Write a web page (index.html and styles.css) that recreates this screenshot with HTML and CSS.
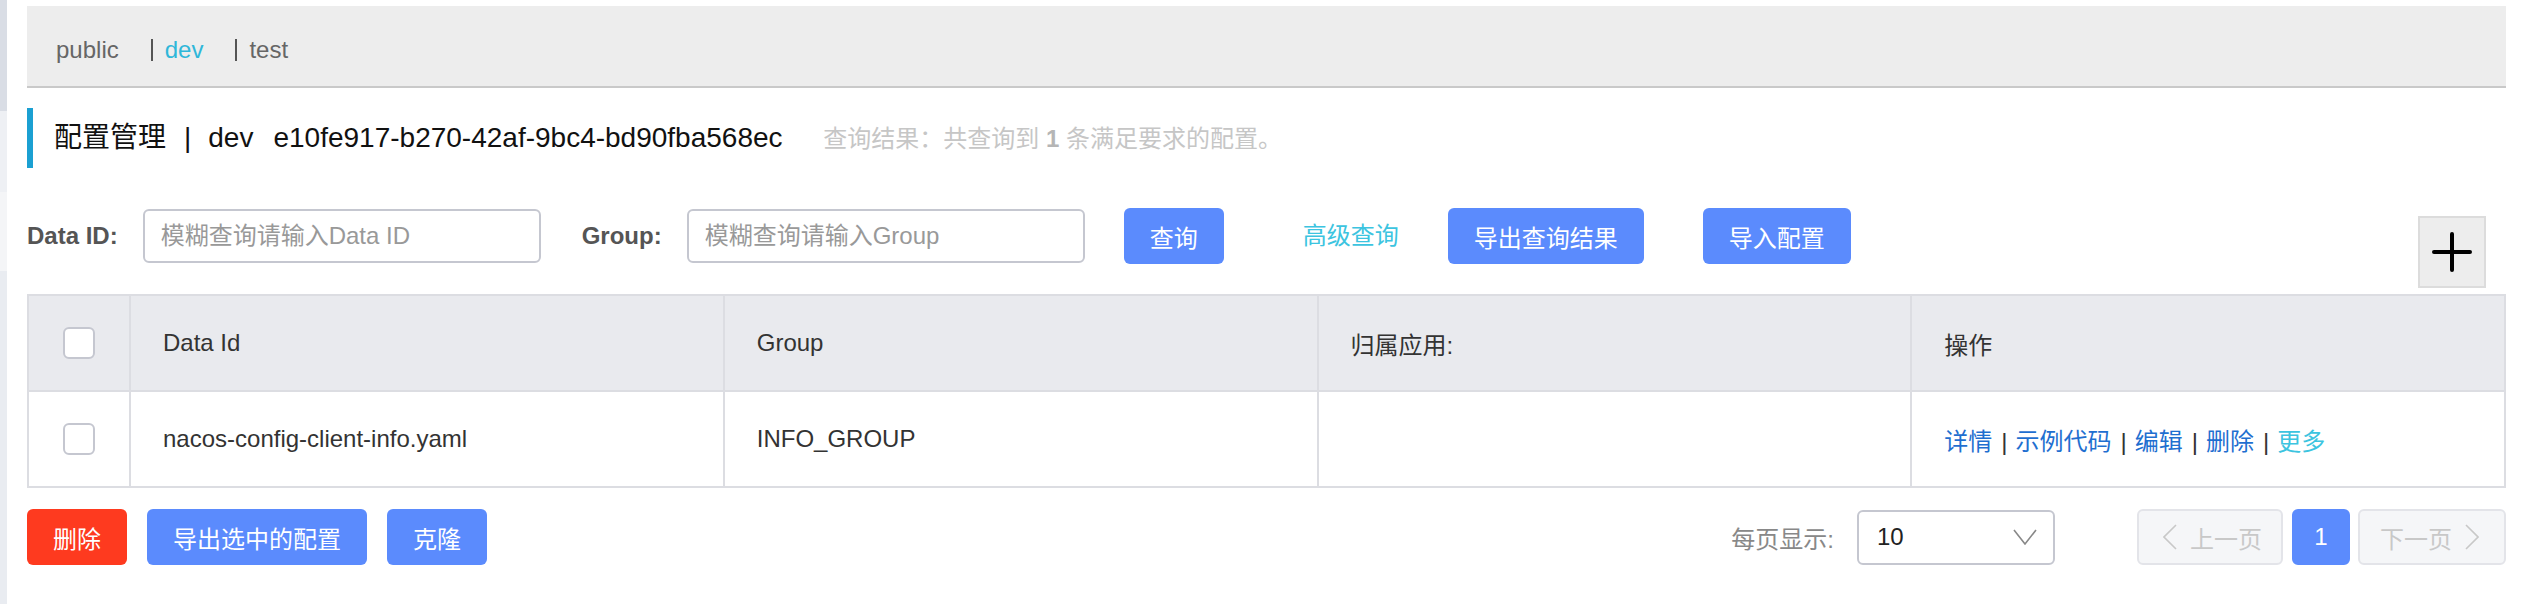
FILE: index.html
```html
<!DOCTYPE html>
<html>
<head>
	<meta charset="utf-8">
	<title>配置管理</title>
	<link rel="stylesheet" href="styles.css">
</head>
<body>
	<div class="page">
	<!-- 左侧菜单露出的一条边 -->
	<aside class="side-strip"></aside>

	<main class="main">
		<nav class="ns-bar">
			<span class="ns-item">public</span>
			<span class="ns-sep"></span><span class="ns-item active">dev</span>
			<span class="ns-sep"></span><span class="ns-item">test</span>
		</nav>

		<section class="page-title">
			<div class="title-line">
				<span class="title-text">配置管理</span><span class="title-sep">|</span><span class="title-text">dev</span><span class="title-text ns-id">e10fe917-b270-42af-9bc4-bd90fba568ec</span>
				<span class="query-result">查询结果：共查询到 <strong>1</strong> 条满足要求的配置。</span>
			</div>
		</section>

		<form class="filter-bar" onsubmit="return false">
			<label class="filter-label">Data ID:</label>
			<input class="filter-input" type="text" placeholder="模糊查询请输入Data ID">
			<label class="filter-label group-label">Group:</label>
			<input class="filter-input group-input" type="text" placeholder="模糊查询请输入Group">
			<button class="btn btn-primary btn-query">查询</button>
			<a href="#!" class="adv-link">高级查询</a>
			<button class="btn btn-primary btn-export">导出查询结果</button>
			<button class="btn btn-primary btn-import">导入配置</button>
			<button class="add-btn" type="button">
				<svg width="40" height="40" viewBox="0 0 40 40">
					<path d="M20 2 V38 M2 20 H38" stroke="#000" stroke-width="4" stroke-linecap="round" fill="none"/>
				</svg>
			</button>
		</form>

		<table class="config-table">
			<colgroup>
				<col class="col-check">
				<col class="col-wide">
				<col class="col-wide">
				<col class="col-wide">
				<col class="col-wide">
			</colgroup>
			<thead>
				<tr>
					<th class="cell-check"><span class="checkbox"></span></th>
					<th>Data Id</th>
					<th>Group</th>
					<th>归属应用:</th>
					<th>操作</th>
				</tr>
			</thead>
			<tbody>
				<tr>
					<td class="cell-check"><span class="checkbox"></span></td>
					<td>nacos-config-client-info.yaml</td>
					<td>INFO_GROUP</td>
					<td></td>
					<td class="ops">
						<a href="#!">详情</a><span class="op-sep">|</span><a href="#!">示例代码</a><span class="op-sep">|</span><a href="#!">编辑</a><span class="op-sep">|</span><a href="#!">删除</a><span class="op-sep">|</span><a href="#!" class="more">更多</a>
					</td>
				</tr>
			</tbody>
		</table>

		<div class="table-footer">
			<button class="btn btn-danger">删除</button>
			<button class="btn btn-primary">导出选中的配置</button>
			<button class="btn btn-primary">克隆</button>

			<div class="pager">
				<span class="page-size-label">每页显示:</span>
				<div class="page-size">
					<span>10</span>
					<svg width="24" height="16" viewBox="0 0 24 16">
						<path d="M1 1 L12 15 L23 1" stroke="#888" stroke-width="1.6" fill="none"/>
					</svg>
				</div>
				<button class="page-btn prev" disabled>
					<svg width="14" height="26" viewBox="0 0 14 26">
						<path d="M13 1 L1 13 L13 25" stroke="#c8c8c8" stroke-width="1.6" fill="none"/>
					</svg>
					上一页
				</button>
				<button class="page-btn current">1</button>
				<button class="page-btn next" disabled>
					下一页
					<svg width="14" height="26" viewBox="0 0 14 26">
						<path d="M1 1 L13 13 L1 25" stroke="#c8c8c8" stroke-width="1.6" fill="none"/>
					</svg>
				</button>
			</div>
		</div>
	</main>
	</div>
</body>
</html>
```

FILE: styles.css
```css
	body {
		margin: 0;
		font-family: "Liberation Sans", "Noto Sans CJK SC", sans-serif;
		font-size: 24px;
		color: #333;
		background: #fff;
	}
	.page {
		display: flex;
		min-height: 604px;
	}
	.side-strip {
		width: 7px;
		flex: none;
		background: linear-gradient(#d9dde5 0, #d9dde5 111px, #eef0f4 111px, #eef0f4 192px, #f4f5f7 192px, #f4f5f7 271px, #e9ecf1 271px);
	}
	.main {
		flex: 1;
		padding: 0 18px 0 20px;
	}

	/* 命名空间 */
	.ns-bar {
		margin-top: 6px;
		height: 82px;
		padding: 8px 0 0 29px;
		box-sizing: border-box;
		background: #ededed;
		border-bottom: 2px solid #c9c9c9;
		display: flex;
		align-items: center;
	}
	.ns-item {
		color: #666;
		line-height: 28px;
	}
	.ns-item.active {
		color: #2fb7d9;
	}
	.ns-sep {
		width: 2px;
		height: 22px;
		background: #555;
		margin: 0 12px 0 32px;
	}

	/* 标题 */
	.page-title {
		margin-top: 20px;
		height: 60px;
		border-left: 6px solid #1ba0d2;
		padding-left: 21px;
		display: flex;
		align-items: center;
	}
	.title-line {
		line-height: 40px;
		white-space: nowrap;
	}
	.title-text {
		font-size: 28px;
		color: #111;
	}
	.title-sep {
		font-size: 28px;
		color: #111;
		margin: 0 17px 0 18px;
	}
	.ns-id {
		margin-left: 20px;
	}
	.query-result {
		margin-left: 34px;
		color: #c6c6c6;
	}
	.query-result strong {
		color: #b5b5b5;
	}

	/* 查询条件 */
	.filter-bar {
		margin: 40px 0 0;
		display: flex;
		align-items: flex-start;
	}
	.filter-label {
		line-height: 56px;
		font-weight: bold;
		color: #555;
		margin-right: 25px;
	}
	.group-label {
		margin-left: 41px;
	}
	.filter-input {
		width: 398px;
		height: 54px;
		margin-top: 1px;
		box-sizing: border-box;
		border: 2px solid #c5c7d0;
		border-radius: 6px;
		padding: 0 16px;
		font-family: inherit;
		font-size: 24px;
		color: #333;
		outline: none;
	}
	.filter-input::placeholder {
		color: #999;
	}
	.btn {
		height: 56px;
		padding: 0 26px;
		border: none;
		border-radius: 6px;
		font-family: inherit;
		font-size: 24px;
		color: #fff;
		cursor: pointer;
		white-space: nowrap;
	}
	.btn-primary {
		background: #5b8bfd;
	}
	.btn-danger {
		background: #fe3a1f;
	}
	.btn-query {
		margin-left: 39px;
	}
	.adv-link {
		margin-left: 79px;
		line-height: 56px;
		color: #3cc4e0;
		text-decoration: none;
	}
	.btn-export {
		margin-left: 49px;
	}
	.btn-import {
		margin-left: 59px;
	}
	.add-btn {
		margin: 8px 20px 0 auto;
		width: 68px;
		height: 72px;
		box-sizing: border-box;
		background: #ededed;
		border: 2px solid #dcdcdc;
		padding: 0;
		display: flex;
		align-items: center;
		justify-content: center;
	}

	/* 表格 */
	.config-table {
		margin-top: 6px;
		width: 100%;
		table-layout: fixed;
		border-collapse: collapse;
		border: 2px solid #dcdde2;
	}
	.col-check {
		width: 102px;
	}
	.config-table th,
	.config-table td {
		height: 94px;
		padding: 0 0 0 32px;
		border: 2px solid #dcdde2;
		text-align: left;
		font-weight: normal;
		color: #333;
		white-space: nowrap;
	}
	.config-table th {
		background: #e9eaee;
	}
	.config-table .cell-check {
		padding: 0;
	}
	.checkbox {
		display: block;
		width: 32px;
		height: 32px;
		box-sizing: border-box;
		margin: 0 auto;
		background: #fff;
		border: 2px solid #c5c7d0;
		border-radius: 6px;
	}
	.ops a {
		color: #1f6fd0;
		text-decoration: none;
	}
	.ops a.more {
		color: #3cc4e0;
	}
	.op-sep {
		color: #333;
		margin: 0 8px 0 9px;
	}

	/* 底部操作 + 分页 */
	.table-footer {
		margin-top: 21px;
		display: flex;
		align-items: center;
		gap: 20px;
	}
	.pager {
		margin-left: auto;
		display: flex;
		align-items: center;
	}
	.page-size-label {
		color: #888;
		margin-right: 23px;
	}
	.page-size {
		width: 198px;
		height: 55px;
		box-sizing: border-box;
		border: 2px solid #c5c7d0;
		border-radius: 6px;
		padding: 0 16px 0 18px;
		display: flex;
		align-items: center;
		justify-content: space-between;
		color: #222;
	}
	.page-btn {
		height: 56px;
		box-sizing: border-box;
		border-radius: 6px;
		font-family: inherit;
		font-size: 24px;
		display: flex;
		align-items: center;
		gap: 13px;
		white-space: nowrap;
	}
	.page-btn.prev,
	.page-btn.next {
		background: #f5f6f8;
		border: 2px solid #e3e4e9;
		color: #c8c8c8;
	}
	.page-btn.prev {
		width: 146px;
		margin-left: 82px;
		padding: 0 0 0 24px;
	}
	.page-btn.next {
		width: 148px;
		padding: 0 0 0 20px;
	}
	.page-btn.current {
		width: 58px;
		margin: 0 8px 0 9px;
		justify-content: center;
		background: #5b8bfd;
		border: 2px solid #5b8bfd;
		color: #fff;
	}
```
